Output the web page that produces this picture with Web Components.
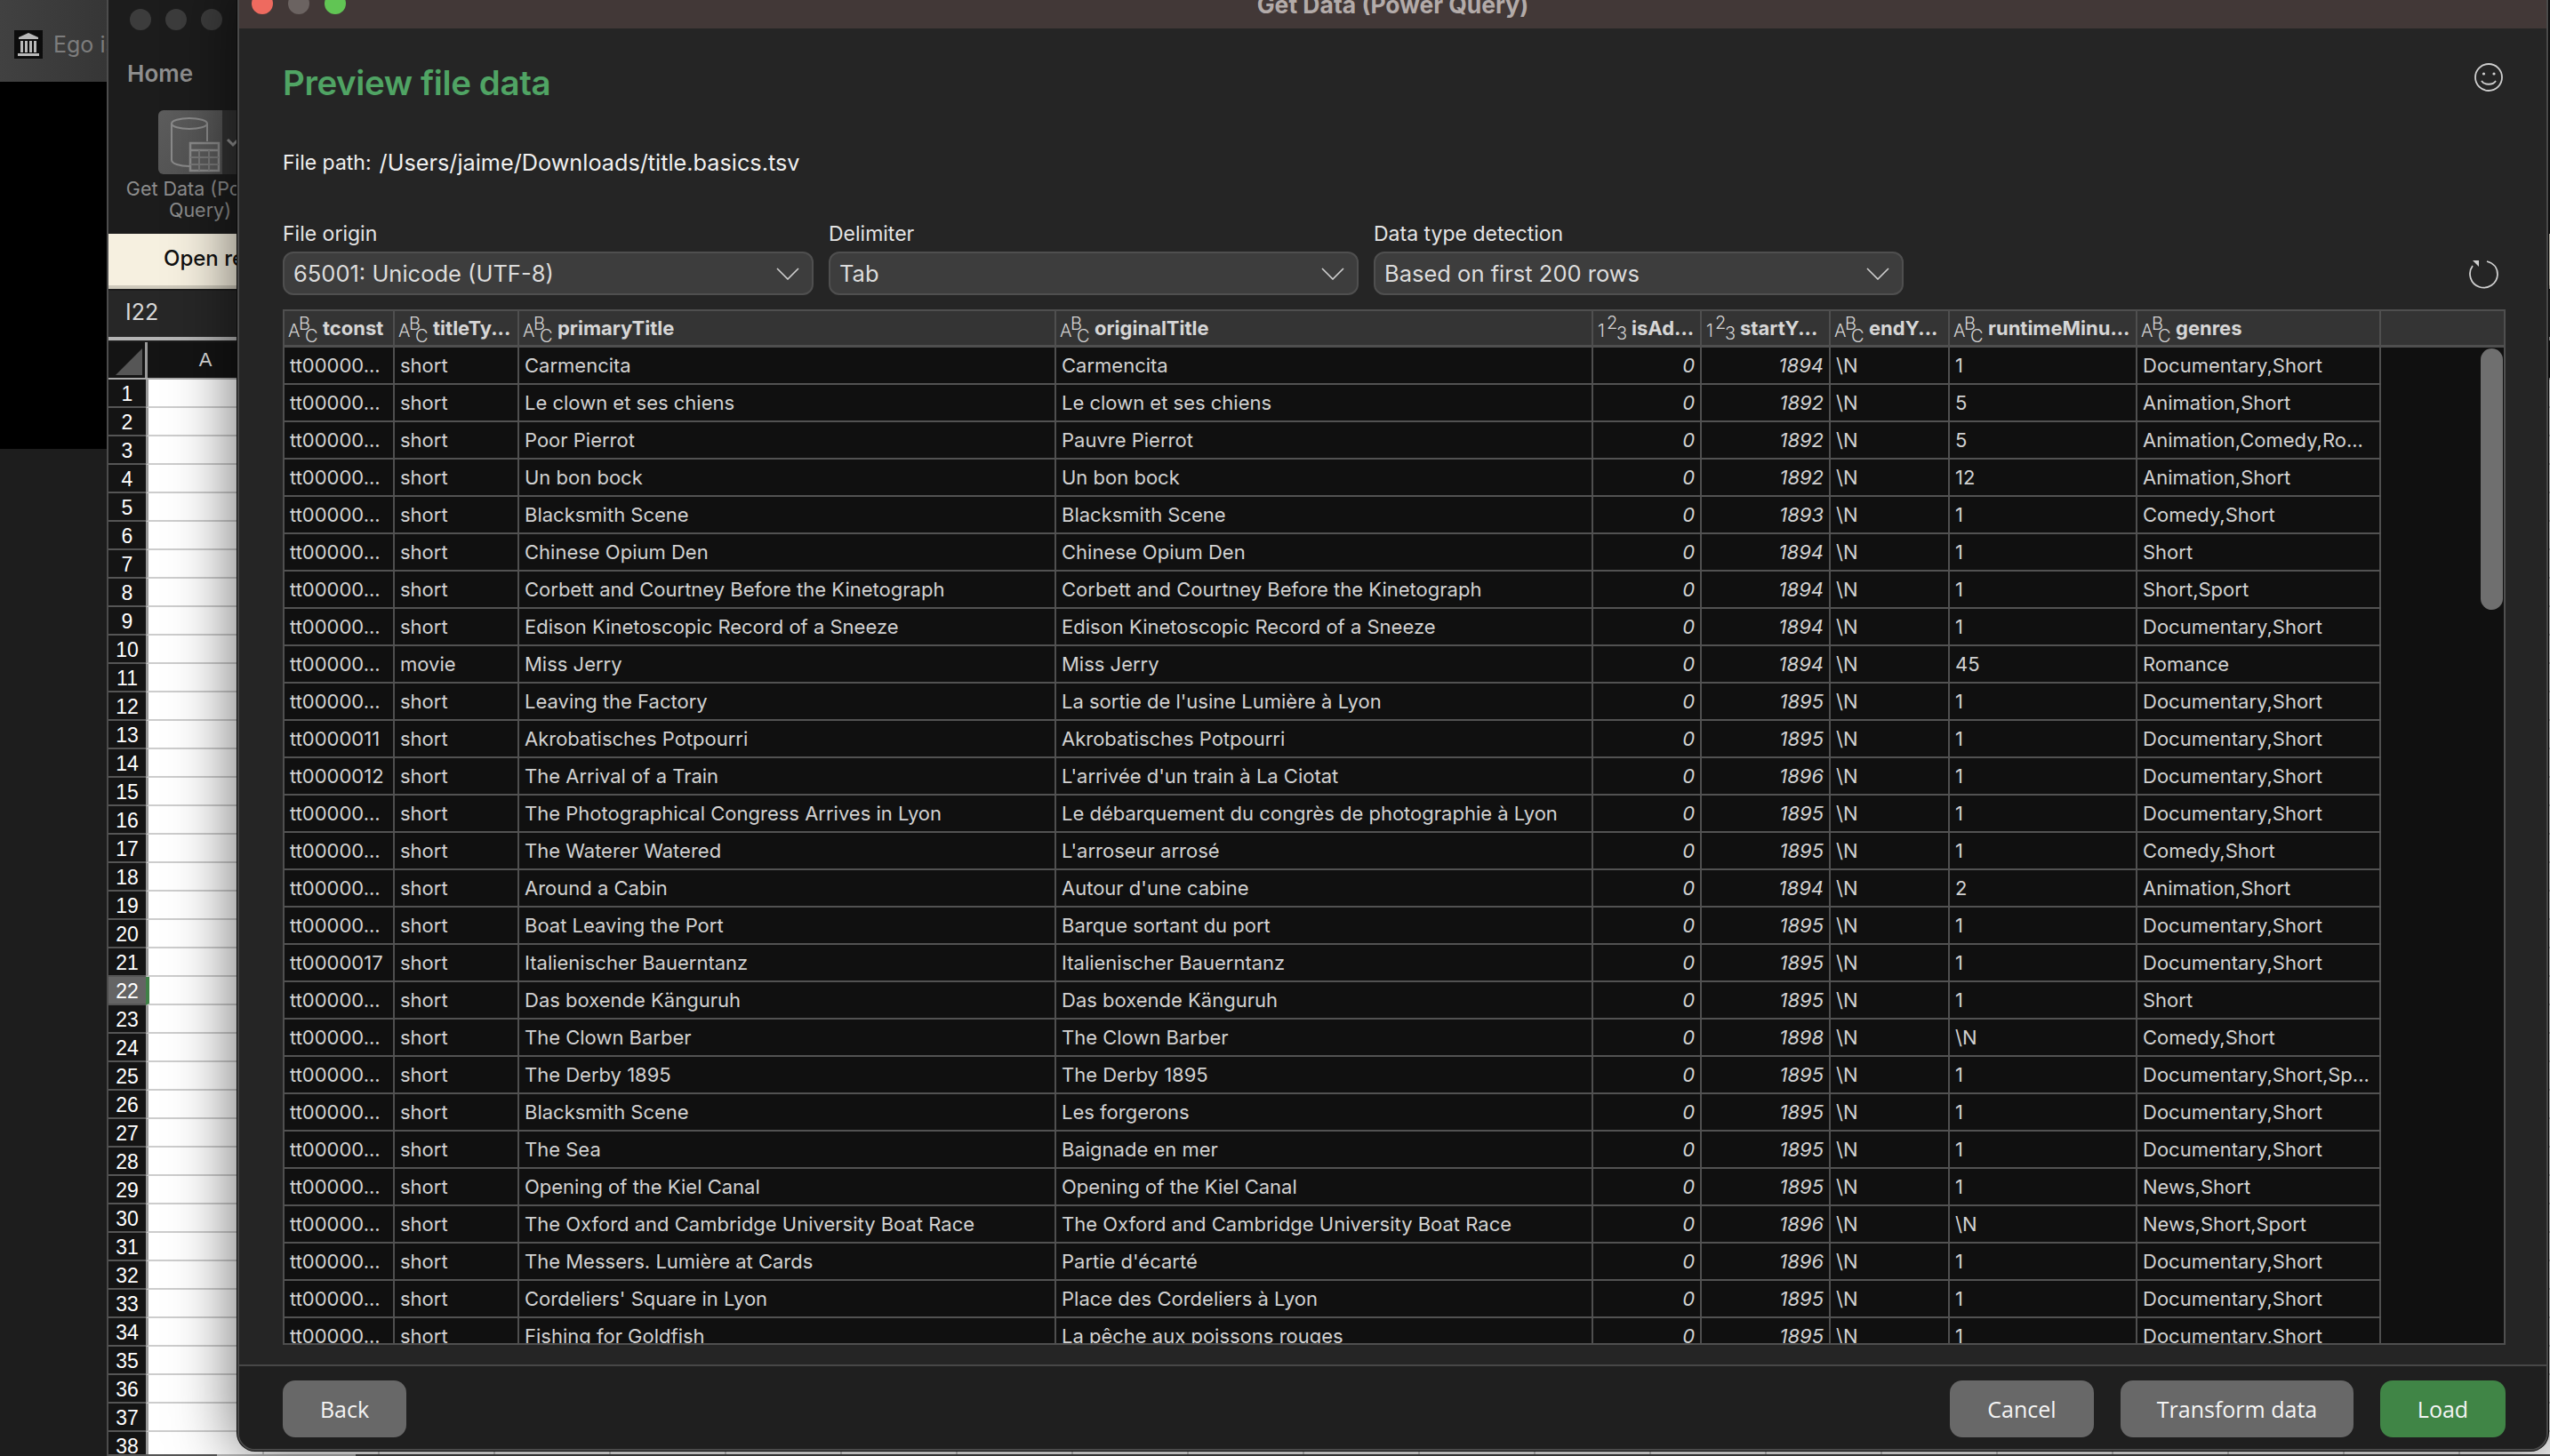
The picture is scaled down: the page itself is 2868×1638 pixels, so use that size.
<!DOCTYPE html>
<html>
<head>
<meta charset="utf-8">
<title>Get Data (Power Query)</title>
<style>
html, body { margin: 0; height: 100%; background: #000; overflow: hidden; }
</style>
</head>
<body>
<desktop-stage>
  <back-window slot="back"></back-window>
  <excel-window slot="excel"></excel-window>
  <query-dialog slot="dialog"></query-dialog>
</desktop-stage>

<script>
const FONT = `Inter, "Noto Sans", sans-serif`;

function lights(colors, size) {
  return colors.map((c) => `<i style="display:block;width:${size}px;height:${size}px;border-radius:50%;background:${c}"></i>`).join('');
}

class DesktopStage extends HTMLElement {
  constructor() {
    super();
    this.attachShadow({mode: 'open'}).innerHTML = `
<style>
:host { display: block; position: relative; width: 2868px; height: 1638px; overflow: hidden; background: #1d1d1d; font-family: ${FONT}; }
</style>
<slot name="back"></slot>
<slot name="excel"></slot>
<slot name="dialog"></slot>`;
  }
}

class BackWindow extends HTMLElement {
  constructor() {
    super();
    this.attachShadow({mode: 'open'}).innerHTML = `
<style>
:host { display: flex; flex-direction: column; position: absolute; left: 0; top: 0; width: 120px; height: 1638px; overflow: hidden; }
.bar { height: 92px; flex: none; background: linear-gradient(90deg, #414141, #363636); display: flex; align-items: center; gap: 12px; padding: 8px 0 0 16px; box-sizing: border-box; white-space: nowrap; }
.logo { width: 32px; height: 32px; flex: none; background: #0c0c0c; }
.name { font-size: 25px; color: #7d7d7d; }
.black { height: 413px; flex: none; background: #000; }
.rest { flex: 1; background: #1d1d1d; }
</style>
<div class="bar">
  <svg class="logo" viewBox="0 0 32 32">
    <path d="M16 3 L27 8 V10 H5 V8 Z" fill="#b9b9b9"/>
    <path d="M7 12h3v13H7zM12 12h3v13h-3zM17 12h3v13h-3zM22 12h3v13h-3z" fill="#b9b9b9"/>
    <path d="M4 26h24v3H4z" fill="#b9b9b9"/>
  </svg>
  <span class="name">Ego is</span>
</div>
<div class="black"></div>
<div class="rest"></div>`;
  }
}

class ExcelWindow extends HTMLElement {
  constructor() {
    super();
    let rows = '';
    for (let i = 1; i <= 38; i++) {
      rows += `<div class="row${i === 22 ? ' sel' : ''}"><span class="num">${i}</span><span class="cells"></span></div>`;
    }
    this.attachShadow({mode: 'open'}).innerHTML = `
<style>
:host { display: flex; flex-direction: column; position: absolute; left: 120px; top: 0; width: 2748px; height: 1638px; box-sizing: border-box; background: #1c1c1c; border-left: 2px solid #4c4c4c; overflow: hidden; }
.lights { display: flex; gap: 16px; padding: 10px 0 0 24px; height: 62px; box-sizing: border-box; flex: none; }
.tabs { height: 42px; flex: none; padding-left: 21px; font-size: 26px; font-weight: 600; color: #8f8f8f; line-height: 42px; }
.ribbon { height: 139px; flex: none; margin-top: 20px; padding-left: 23px; color: #8d8d8d; font-size: 21.5px; line-height: 24px; }
.btn { width: 160px; display: flex; flex-direction: column; align-items: center; text-align: center; white-space: nowrap; }
.tile { width: 94px; height: 72px; display: flex; border-radius: 6px; margin-bottom: 4px; overflow: hidden; }
.tile .main { width: 72px; background: linear-gradient(135deg, #5d5d5d, #4f4f4f); }
.tile .more { width: 22px; background: #323232; }
.notice { height: 62px; flex: none; box-sizing: border-box; background: #f6f0e0; border-bottom: 4px solid #cfcabc; padding-left: 62px; line-height: 56px; font-size: 24px; font-weight: 500; color: #111; white-space: nowrap; }
.formula { height: 52px; flex: none; margin-top: 2px; padding-left: 19px; line-height: 48px; font-size: 25px; color: #d8d8d8; background: #272727; }
.rule { height: 4px; flex: none; background: #b5b5b5; }
.head { height: 42px; flex: none; margin-top: 2px; display: flex; background: #141414; border-bottom: 2px solid #aaa; box-sizing: border-box; }
.corner { width: 44px; box-sizing: border-box; flex: none; border-right: 3px solid #999; padding: 7px 0 0 8px; }
.col { width: 130px; text-align: center; font: 22px/40px "Liberation Sans", sans-serif; color: #ddd; }
.sheet { flex: 1; min-height: 0; overflow: hidden; }
.row { display: flex; height: 32px; }
.num { width: 42px; flex: none; background: #141414; border-bottom: 2px solid #555; box-sizing: border-box; text-align: center; font: 23px/33px "Liberation Sans", sans-serif; color: #fff; overflow: hidden; }
.cells { flex: 1; box-sizing: border-box; border-left: 3px solid #9a9a9a; border-bottom: 2px solid #cdcdcd; background: #fff repeating-linear-gradient(90deg, transparent 0 128px, #cdcdcd 128px 130px); }
.sel .num { background: #646464; }
.sel .cells { border-left: 4px solid #3f8047; }
.strip { height: 2px; flex: none; background: linear-gradient(90deg, #555 0 122px, #bbb 122px 278px, #444 278px); }
</style>
<div class="lights">${lights(['#3c3c3c', '#3c3c3c', '#3c3c3c'], 24)}</div>
<div class="tabs">Home</div>
<div class="ribbon">
  <div class="btn">
    <div class="tile">
      <div class="main">
        <svg width="72" height="72" viewBox="0 0 72 72" fill="none" stroke="#8a8a8a" stroke-width="2">
          <ellipse cx="35" cy="15" rx="20" ry="6"/>
          <path d="M15 15 V56 C15 60 24 63 35 63 M55 15 V35"/>
          <rect x="36" y="37" width="32" height="31" fill="#5a5a5a" stroke-width="2.5"/>
          <path d="M36 45 H68" stroke-width="2.5"/>
          <path d="M36 53 H68 M36 61 H68 M46 45 V68 M57 45 V68" stroke="#787878"/>
        </svg>
      </div>
      <div class="more">
        <svg width="22" height="72" viewBox="0 0 22 72" fill="none" stroke="#8f8f8f" stroke-width="3"><path d="M6 33 L12 39 L18 33"/></svg>
      </div>
    </div>
    <span>Get Data (Power<br>Query)</span>
  </div>
</div>
<div class="notice">Open re</div>
<div class="formula">I22</div>
<div class="rule"></div>
<div class="head">
  <div class="corner"><svg width="30" height="30" viewBox="0 0 30 30"><path d="M30 0 V30 H0 Z" fill="#565656"/></svg></div>
  <div class="col">A</div>
</div>
<div class="sheet">${rows}</div>
<div class="strip"></div>`;
  }
}

class DialogSelect extends HTMLElement {
  constructor() {
    super();
    this.attachShadow({mode: 'open'}).innerHTML = `
<style>
:host { display: flex; flex-direction: column; gap: 6px; }
label { font-size: 23px; line-height: 28px; color: #e4e4e4; }
.box { height: 49px; box-sizing: border-box; background: #3d3d3d; border: 2px solid #4f4f4f; border-radius: 12px; display: flex; align-items: center; justify-content: space-between; padding: 0 14px 0 10px; font-size: 25.5px; color: #dcdcdc; }
svg { flex: none; }
</style>
<label></label>
<div class="box"><span><slot></slot></span>
<svg width="26" height="14" viewBox="0 0 26 14" fill="none" stroke="#d0d0d0" stroke-width="1.6"><path d="M1 1 L13 13 L25 1"/></svg></div>`;
    this.shadowRoot.querySelector('label').textContent = this.getAttribute('label');
  }
}

class TypeIcon extends HTMLElement {
  constructor() {
    super();
    const kind = this.getAttribute('kind') || 'ABC';
    const g = kind.split('');
    const pos = kind === '123'
      ? [[2, 28], [12, 19], [23, 31]]
      : [[1, 28], [13, 20], [20, 34]];
    this.attachShadow({mode: 'open'}).innerHTML = `
<style>
:host { display: block; flex: none; width: 34px; height: 36px; }
text { font: 300 20px ${FONT}; fill: #d4d4d4; }
</style>
<svg width="34" height="36" viewBox="0 0 34 36">
  ${g.map((ch, i) => `<text x="${pos[i][0]}" y="${pos[i][1]}">${ch}</text>`).join('')}
</svg>`;
  }
}

const COLS = [124, 140, 604, 604, 122, 145, 134, 211, 274];
const HEADERS = [
  ['ABC', 'tconst'], ['ABC', 'titleTy...'], ['ABC', 'primaryTitle'], ['ABC', 'originalTitle'],
  ['123', 'isAd...'], ['123', 'startY...'], ['ABC', 'endY...'], ['ABC', 'runtimeMinu...'], ['ABC', 'genres']
];
const DATA = [
  ['Carmencita', 'Carmencita', 1894, '1', 'Documentary,Short'],
  ['Le clown et ses chiens', 'Le clown et ses chiens', 1892, '5', 'Animation,Short'],
  ['Poor Pierrot', 'Pauvre Pierrot', 1892, '5', 'Animation,Comedy,Ro...'],
  ['Un bon bock', 'Un bon bock', 1892, '12', 'Animation,Short'],
  ['Blacksmith Scene', 'Blacksmith Scene', 1893, '1', 'Comedy,Short'],
  ['Chinese Opium Den', 'Chinese Opium Den', 1894, '1', 'Short'],
  ['Corbett and Courtney Before the Kinetograph', 'Corbett and Courtney Before the Kinetograph', 1894, '1', 'Short,Sport'],
  ['Edison Kinetoscopic Record of a Sneeze', 'Edison Kinetoscopic Record of a Sneeze', 1894, '1', 'Documentary,Short'],
  ['Miss Jerry', 'Miss Jerry', 1894, '45', 'Romance', 'movie'],
  ['Leaving the Factory', "La sortie de l'usine Lumière à Lyon", 1895, '1', 'Documentary,Short'],
  ['Akrobatisches Potpourri', 'Akrobatisches Potpourri', 1895, '1', 'Documentary,Short', 'short', 'tt0000011'],
  ['The Arrival of a Train', "L'arrivée d'un train à La Ciotat", 1896, '1', 'Documentary,Short', 'short', 'tt0000012'],
  ['The Photographical Congress Arrives in Lyon', 'Le débarquement du congrès de photographie à Lyon', 1895, '1', 'Documentary,Short'],
  ['The Waterer Watered', "L'arroseur arrosé", 1895, '1', 'Comedy,Short'],
  ['Around a Cabin', "Autour d'une cabine", 1894, '2', 'Animation,Short'],
  ['Boat Leaving the Port', 'Barque sortant du port', 1895, '1', 'Documentary,Short'],
  ['Italienischer Bauerntanz', 'Italienischer Bauerntanz', 1895, '1', 'Documentary,Short', 'short', 'tt0000017'],
  ['Das boxende Känguruh', 'Das boxende Känguruh', 1895, '1', 'Short'],
  ['The Clown Barber', 'The Clown Barber', 1898, '\\N', 'Comedy,Short'],
  ['The Derby 1895', 'The Derby 1895', 1895, '1', 'Documentary,Short,Sp...'],
  ['Blacksmith Scene', 'Les forgerons', 1895, '1', 'Documentary,Short'],
  ['The Sea', 'Baignade en mer', 1895, '1', 'Documentary,Short'],
  ['Opening of the Kiel Canal', 'Opening of the Kiel Canal', 1895, '1', 'News,Short'],
  ['The Oxford and Cambridge University Boat Race', 'The Oxford and Cambridge University Boat Race', 1896, '\\N', 'News,Short,Sport'],
  ['The Messers. Lumière at Cards', "Partie d'écarté", 1896, '1', 'Documentary,Short'],
  ["Cordeliers' Square in Lyon", 'Place des Cordeliers à Lyon', 1895, '1', 'Documentary,Short'],
  ['Fishing for Goldfish', 'La pêche aux poissons rouges', 1895, '1', 'Documentary,Short']
];

class DataPreview extends HTMLElement {
  constructor() {
    super();
    const head = HEADERS.map(([kind, name]) =>
      `<div class="hc"><type-icon kind="${kind}"></type-icon><span>${name}</span></div>`).join('');
    const rows = DATA.map((r) => {
      const id = r[6] || 'tt00000...';
      const type = r[5] || 'short';
      const c = [id, type, r[0], r[1]].map((t) => `<div class="c">${t}</div>`).join('');
      return `<div class="r">${c}<div class="c n">0</div><div class="c n">${r[2]}</div><div class="c">\\N</div><div class="c">${r[3]}</div><div class="c">${r[4]}</div></div>`;
    }).join('');
    const tpl = COLS.map((w) => w + 'px').join(' ');
    this.attachShadow({mode: 'open'}).innerHTML = `
<style>
:host { display: flex; flex-direction: column; flex: 1; min-height: 0; box-sizing: border-box; border: 2px solid #4f4f4f; background: #101010; overflow: hidden; }
.head { display: grid; grid-template-columns: ${tpl} 1fr; height: 41px; flex: none; box-sizing: border-box; background: #343434; border-bottom: 3px solid #4f4f4f; }
.hc { display: flex; align-items: center; gap: 6px; padding-left: 3px; box-sizing: border-box; border-right: 2px solid #4f4f4f; font-size: 22px; font-weight: 700; color: #d6d6d6; white-space: nowrap; overflow: hidden; }
.hc.fill { border-right: 0; }
.body { flex: 1; min-height: 0; position: relative; overflow: hidden; }
.r { display: grid; grid-template-columns: ${tpl}; grid-template-rows: 40px; width: max-content; height: 42px; box-sizing: border-box; border-bottom: 2px solid #525252; }
.c { box-sizing: border-box; height: 40px; border-right: 2px solid #4f4f4f; padding: 0 6px; line-height: 41px; font-size: 22px; color: #d2d2d2; white-space: nowrap; overflow: hidden; }
.n { font-style: italic; text-align: right; }
.thumb { position: absolute; right: 1px; top: 1px; width: 25px; height: 294px; border-radius: 13px; background: #6f6f6f; }
</style>
<div class="head">${head}<div class="hc fill"></div></div>
<div class="body">${rows}<div class="thumb"></div></div>`;
  }
}

class DialogButton extends HTMLElement {
  constructor() {
    super();
    this.attachShadow({mode: 'open'}).innerHTML = `
<style>
:host { display: flex; align-items: center; justify-content: center; height: 64px; box-sizing: border-box; border-radius: 14px; background: #686868; color: #f4f4f4; font: 25px "Open Sans", sans-serif; }
:host([primary]) { background: #408546; }
</style>
<slot></slot>`;
  }
}

class QueryDialog extends HTMLElement {
  constructor() {
    super();
    this.attachShadow({mode: 'open'}).innerHTML = `
<style>
:host { display: flex; flex-direction: column; position: absolute; left: 267px; top: -24px; width: 2599px; height: 1656px; box-sizing: border-box; background: #252525; border: 2px solid #4a4a4a; border-radius: 20px; overflow: hidden; box-shadow: 0 0 0 1px #0a0a0a, 0 0 70px 4px rgba(0,0,0,.55); }
.titlebar { height: 54px; flex: none; background: #423837; position: relative; display: flex; align-items: center; justify-content: center; }
.lights { position: absolute; left: 14px; top: 14px; display: flex; gap: 17px; }
.titlebar b { font-size: 26.5px; font-weight: 700; color: #b3aba9; margin-top: -1px; }
.main { flex: 1; min-height: 0; display: flex; flex-direction: column; padding: 36px 46px 22px 49px; }
.top { display: flex; justify-content: space-between; align-items: center; height: 50px; flex: none; }
.top svg { margin: -12px 2px 0 0; }
h1 { margin: 0; font-size: 38.5px; font-weight: 600; color: #50a464; letter-spacing: -.4px; }
.path { display: flex; align-items: center; gap: 9px; height: 40px; margin-top: 45px; flex: none; color: #f0f0f0; }
.path small { font-size: 23px; }
.path span { font-size: 25.25px; }
.opts { display: grid; grid-template-columns: 597px 596px 596px 1fr; column-gap: 17px; align-items: end; margin-top: 46px; flex: none; }
.refresh { justify-self: end; margin: 0 8px 6px 0; }
data-preview { margin-top: 16px; }
.foot { height: 95px; flex: none; box-sizing: border-box; background: #1f1f1f; border-top: 2px solid #474747; display: flex; padding: 16px 46px 0 49px; gap: 30px; }
.foot .sp { flex: 1; }
</style>
<div class="titlebar"><div class="lights">${lights(['#ee6a5f', '#6b6361', '#61c554'], 24)}</div><b>Get Data (Power Query)</b></div>
<div class="main">
  <div class="top">
    <h1>Preview file data</h1>
    <svg width="34" height="34" viewBox="0 0 34 34" fill="none" stroke="#cfcfcf" stroke-width="1.8">
      <circle cx="17" cy="17" r="15"/>
      <circle cx="11.500" cy="13" r="1.6" fill="#cfcfcf" stroke="none"/><circle cx="23" cy="13" r="1.6" fill="#cfcfcf" stroke="none"/>
      <path d="M9 21 C12 26 22 26 25 21"/>
    </svg>
  </div>
  <div class="path"><small>File path:</small><span>/Users/jaime/Downloads/title.basics.tsv</span></div>
  <div class="opts">
    <dialog-select label="File origin">65001: Unicode (UTF-8)</dialog-select>
    <dialog-select label="Delimiter">Tab</dialog-select>
    <dialog-select label="Data type detection">Based on first 200 rows</dialog-select>
    <svg class="refresh" width="34" height="36" viewBox="0 0 34 36" fill="none" stroke="#cfcfcf" stroke-width="1.8">
      <path d="M21 4 C29 6 33 12 33 19 A15.500 15.500 0 1 1 5 9"/>
      <path d="M5 3 H12 V10 Z" fill="#cfcfcf" stroke="none"/>
    </svg>
  </div>
  <data-preview></data-preview>
</div>
<div class="foot">
  <dialog-button style="width:139px">Back</dialog-button>
  <span class="sp"></span>
  <dialog-button style="width:162px">Cancel</dialog-button>
  <dialog-button style="width:262px">Transform data</dialog-button>
  <dialog-button style="width:141px" primary>Load</dialog-button>
</div>`;
  }
}

customElements.define('type-icon', TypeIcon);
customElements.define('data-preview', DataPreview);
customElements.define('dialog-select', DialogSelect);
customElements.define('dialog-button', DialogButton);
customElements.define('back-window', BackWindow);
customElements.define('excel-window', ExcelWindow);
customElements.define('query-dialog', QueryDialog);
customElements.define('desktop-stage', DesktopStage);
</script>
</body>
</html>
